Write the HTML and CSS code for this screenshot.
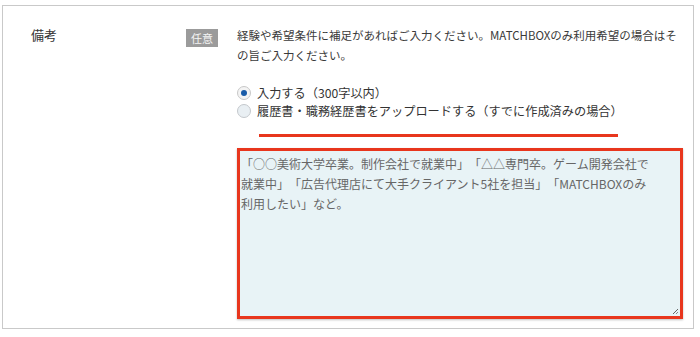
FILE: index.html
```html
<!DOCTYPE html>
<html lang="ja">
<head>
    <meta charset="UTF-8">
    <meta name="viewport" content="width=device-width, initial-scale=1.0">
    <title>備考</title>
    <link rel="stylesheet" href="styles.css">
</head>
<body>
    <div class="form-box">
        <div class="form-row">
            <div class="field-name">備考</div>
            <div class="badge">任意</div>
            <div class="field-body">
                <p class="help">経験や希望条件に補足があればご入力ください。MATCHBOXのみ利用希望の場合はその旨ご入力ください。</p>

                <div class="choices">
                    <label class="choice">
                        <span class="radio checked"></span>
                        入力する（300字以内）
                    </label>
                    <label class="choice">
                        <span class="radio"></span>
                        履歴書・職務経歴書をアップロードする（すでに作成済みの場合）
                    </label>
                </div>
                <div class="mark-line"></div>

                <!-- textarea with placeholder -->
                <div class="textarea">
                    <div class="placeholder">
                        「○○美術大学卒業。制作会社で就業中」「△△専門卒。ゲーム開発会社で<br>
                        就業中」「広告代理店にて大手クライアント5社を担当」「MATCHBOXのみ<br>
                        利用したい」など。
                    </div>
                    <svg class="grip" width="8" height="8" viewBox="0 0 8 8">
                        <line x1="2" y1="7" x2="7" y2="2" stroke="#666" stroke-width="1"/>
                        <line x1="5" y1="7" x2="7" y2="5" stroke="#888" stroke-width="1"/>
                    </svg>
                </div>
            </div>
        </div>
    </div>
</body>
</html>
```

FILE: styles.css
```css
body {
    margin: 0;
    padding: 5px 0 0 2px;
    background-color: #fff;
    font-family: "Noto Sans CJK JP", "Noto Sans", sans-serif;
    color: #333;
    text-spacing-trim: space-all;
}
.form-box {
    width: 690px;
    height: 322px;
    border: 1px solid #c9c9c9;
}
.form-row {
    display: grid;
    grid-template-columns: 164px 32px 446px;
    column-gap: 19px;
    padding-top: 19px;
}
.field-name {
    padding-left: 28px;
    font-size: 13px;
    line-height: 20px;
    color: #333;
}
.badge {
    margin-top: 4px;
    height: 18px;
    line-height: 18px;
    background-color: #9b9b9b;
    color: #f4f4f4;
    font-size: 11px;
    text-align: center;
}
.help {
    margin: 0;
    font-size: 11.5px;
    line-height: 20px;
    color: #3a3a3a;
}
.choices {
    display: flex;
    flex-direction: column;
    margin-top: 19px;
}
.choice {
    display: flex;
    align-items: center;
    gap: 6px;
    height: 18px;
    font-size: 12.2px;
    color: #333;
}
.radio {
    width: 12px;
    height: 12px;
    border: 1px solid #c4c8cc;
    border-radius: 50%;
    background-color: #e9eff3;
    display: flex;
    align-items: center;
    justify-content: center;
    flex-shrink: 0;
}
.radio.checked {
    background-color: #f4f4f4;
    border-color: #c8c8c8;
}
.radio.checked::after {
    content: "";
    width: 6px;
    height: 6px;
    border-radius: 50%;
    background-color: #1a5ca8;
}
.mark-line {
    width: 359px;
    height: 3px;
    margin: 14px 0 0 22px;
    background-color: #e8361d;
}
.textarea {
    position: relative;
    box-sizing: border-box;
    margin-top: 11px;
    height: 171px;
    border: 3px solid #e8361d;
    background-color: #e8f3f6;
    box-shadow: 0 1px 2px rgba(0,0,0,0.25);
    padding: 2.5px 1px 0 1px;
}
.placeholder {
    font-size: 12px;
    line-height: 20px;
    color: #666;
    white-space: nowrap;
}
.grip {
    position: absolute;
    right: 1px;
    bottom: 1px;
}
```
